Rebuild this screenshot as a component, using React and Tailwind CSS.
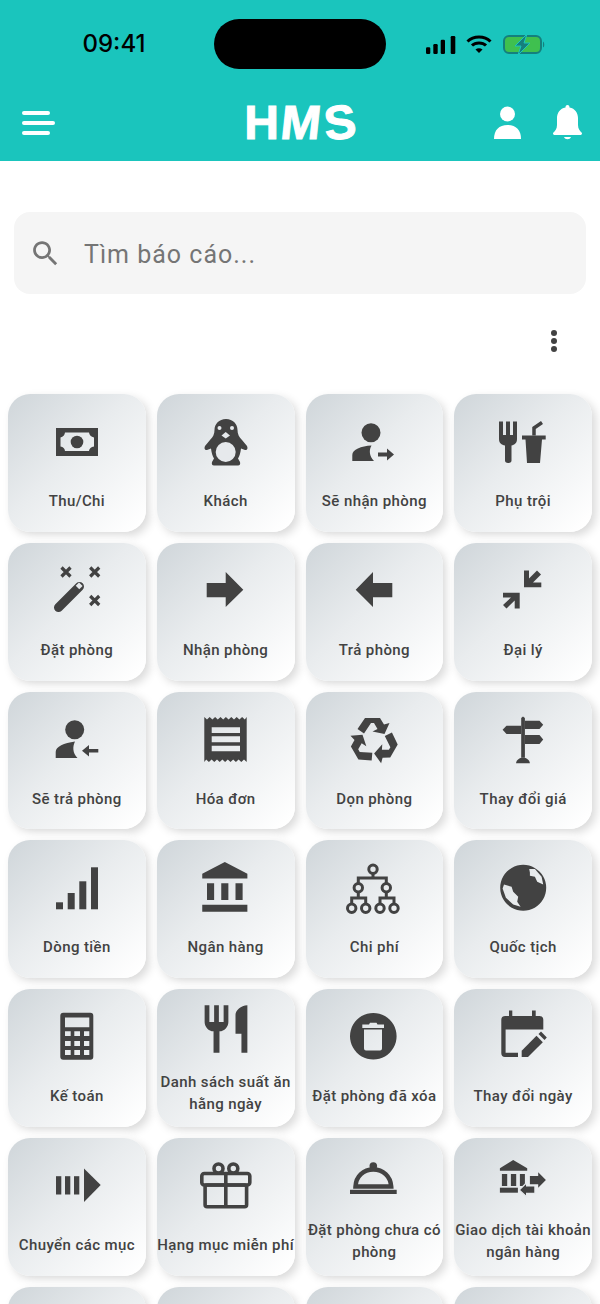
const ink = '#424242';
const cutout = '#e6e9ec';

// every tile glyph is drawn on the same 54 unit square
function Glyph({ children }) {
  return (
    <svg viewBox="0 0 54 54" className="h-[54px] w-[54px] overflow-visible" fill={ink}>
      {children}
    </svg>
  );
}

const Money = () => (
  <Glyph>
    <path
      fillRule="evenodd"
      d="M6 13h42v28H6z M15 17.500H39Q39.500 21.500 44 22.500V31.500Q39.500 32 39 36H15Q14.500 32 10.500 31.500V22.500Q14.500 21.500 15 17.500z"
    />
    <circle cx="27" cy="27" r="6.300" />
  </Glyph>
);

const Penguin = () => (
  <Glyph>
    <path d="M27 4C20 4 15.500 9 15.500 15C15.500 19 14 22 11 25L6 31C5 33 5.500 35.500 8 35L12 33.500C12.500 38 13.500 41 15 43.500L13 47C12.500 49 13 50.500 15 50.500H39C41 50.500 41.500 49 41 47L39 43.500C40.500 41 41.500 38 42 33.500L46 35C48.500 35.500 49 33 48 31L43 25C40 22 38.500 19 38.500 15C38.500 9 34 4 27 4Z" />
    <circle cx="26.700" cy="37" r="10" fill={cutout} />
    <circle cx="20.500" cy="13" r="2" fill={cutout} />
    <circle cx="33" cy="13" r="2" fill={cutout} />
    <path d="M26.700 17L31 20.500L26.700 23.500L22.500 20.500Z" fill={cutout} />
  </Glyph>
);

const PersonIn = () => (
  <Glyph>
    <circle cx="24" cy="17.800" r="9.500" />
    <path d="M5.300 46V40C5.300 34.500 14 31 24.500 30.500C22 35 22 41 27 46Z" />
    <path d="M31 37.500H40V33.500L47 39.500L40 45.500V41.500H31Z" />
  </Glyph>
);

const PersonOut = () => (
  <Glyph>
    <circle cx="24.700" cy="17.700" r="9.500" />
    <path d="M5.700 46V40C5.700 34.500 14 31 25 29.500C22.500 34.500 22.500 41 27.500 46Z" />
    <path d="M48.300 37H39V33L32 38.700L39 44.500V40.500H48.300Z" />
  </Glyph>
);

const ForkCup = () => (
  <Glyph>
    <path d="M3 6.500H7V20H10V6.500H14V20H17V6.500H21V24C21 28 18.500 30 15.500 30.500V45.500C15.500 47 14.500 48 12.500 48H12C10 48 9 47 9 45.500V30.500C5.500 30 3 28 3 24Z" />
    <path d="M26 20.500H49.700V24.500H46L44 48H31L29.500 24.500H26Z" />
    <path d="M38 20.500V13L46 7.500" fill="none" stroke={ink} strokeWidth="3.500" />
  </Glyph>
);

const Wand = () => (
  <Glyph>
    <path d="M8.500 44.500L29.500 23.500" fill="none" stroke={ink} strokeWidth="9" strokeLinecap="round" />
    <path d="M27.500 24.500L30.800 21.200" fill="none" stroke={cutout} strokeWidth="5" />
    <path
      d="M11.500 4.500L20.500 13.500M20.500 4.500L11.500 13.500M40.200 4.500L49.200 13.500M49.200 4.500L40.200 13.500M40.200 33L49.200 42M49.200 33L40.200 42"
      fill="none"
      stroke={ink}
      strokeWidth="3.200"
    />
  </Glyph>
);

const ArrowRight = () => (
  <Glyph>
    <path d="M7.700 20H26.700V9L44.300 26.800L26.700 44V34.200H7.700Z" />
  </Glyph>
);

const ArrowLeft = () => (
  <Glyph>
    <path d="M45.300 20H26V9L8.700 26.800L26 44V34.200H45.300Z" />
  </Glyph>
);

const Compress = () => (
  <Glyph>
    <path d="M28 7.500H33V15.500L41 7.500L45 11.500L37 19.500H45.300V24.200H28Z" />
    <path d="M7 29.800H23.700V45.500H18.700V37.500L10.500 45.500L7 42L15 34.500H7Z" />
  </Glyph>
);

const Receipt = () => (
  <Glyph>
    <path
      fillRule="evenodd"
      d="M5.300 5L8 7.500L10.700 5L13.400 7.500L16.100 5L18.800 7.500L21.500 5L24.200 7.500L26.900 5L29.600 7.500L32.300 5L35 7.500L37.700 5L40.400 7.500L43.100 5L45.800 7.500L47.700 5V50L45 47.500L42.300 50L39.600 47.500L36.900 50L34.200 47.500L31.500 50L28.800 47.500L26.100 50L23.400 47.500L20.700 50L18 47.500L15.300 50L12.600 47.500L9.900 50L7.200 47.500L5.300 50Z M12.700 15.300H41V21H12.700Z M12.700 24.300H41V30.300H12.700Z M12.700 33.700H41V39.300H12.700Z"
    />
  </Glyph>
);

// one chasing arrow, turned twice around the middle of the symbol
const recycleArrow = 'M10.500 17L18 6H33L37 12.500L42.500 11L37.500 22L25.500 19.500L30.500 17L27 11H24L17 21.500Z';

const Recycle = () => (
  <Glyph>
    <path d={recycleArrow} />
    <path d={recycleArrow} transform="rotate(120 26.700 28.700)" />
    <path d={recycleArrow} transform="rotate(240 26.700 28.700)" />
  </Glyph>
);

const Signpost = () => (
  <Glyph>
    <path d="M25.200 6L27 4.500L28.900 6V45.700H25.200Z" />
    <path d="M28.900 8.700H43.500L47.200 12.800L43.500 17H28.900Z" />
    <path d="M25.200 13.700H10.500L6.600 17.800L10.500 22H25.200Z" />
    <path d="M28.900 23H43.500L47.200 27.500L43.500 32H28.900Z" />
    <path d="M20 51.300C20.500 47.500 23.500 45.700 27 45.700C30.500 45.700 33.400 47.500 33.900 51.300Z" />
  </Glyph>
);

const Bars = () => (
  <Glyph>
    <rect x="6" y="41.300" width="7" height="7" />
    <rect x="17.700" y="32" width="7" height="16.300" />
    <rect x="29.300" y="20.300" width="7" height="28" />
    <rect x="41" y="6.300" width="7" height="42" />
  </Glyph>
);

const Bank = () => (
  <Glyph>
    <g transform="translate(-1.500 -1.500) scale(2.375)">
      <path d="M4 10v7h3v-7H4zm6 0v7h3v-7h-3zM2 22h19v-3H2v3zm14-12v7h3v-7h-3zm-4.500-9L2 6v2h19V6l-9.500-5z" />
    </g>
  </Glyph>
);

const Tree = () => (
  <Glyph>
    <g fill="none" stroke={ink} strokeWidth="3">
      <path d="M26 12.500V17M11.300 22.500V17H39.300V22.500M11.300 31V37M4.700 43V37H18.700V43M39.300 31V37M33 43V37H47V43" />
      <circle cx="26" cy="8.300" r="4.200" />
      <circle cx="11.300" cy="26.700" r="4.200" />
      <circle cx="39.300" cy="26.700" r="4.200" />
      <circle cx="4.700" cy="47.300" r="4.200" />
      <circle cx="18.700" cy="47.300" r="4.200" />
      <circle cx="33" cy="47.300" r="4.200" />
      <circle cx="47" cy="47.300" r="4.200" />
    </g>
  </Glyph>
);

const Globe = () => (
  <Glyph>
    <path
      fillRule="evenodd"
      d="M27.200 3.800A23 23 0 1 1 27.199 3.800Z M33.200 8.100L38.900 8.100L45.600 15.800L47.200 23.400L41.200 20.800L38.900 15.800L33.900 14.800L33.900 11.400Z M6.600 27.400L8 23.400L15.600 25.800L17.200 30.800L22.200 35.800L21.200 40.800L24.600 45.800L17.200 43.400L9.900 36.800Z"
    />
  </Glyph>
);

const Calculator = () => (
  <Glyph>
    <path
      fillRule="evenodd"
      d="M13.300 2.800H40.300A3 3 0 0 1 43.300 5.800V46.800A3 3 0 0 1 40.300 49.800H13.300A3 3 0 0 1 10.300 46.800V5.800A3 3 0 0 1 13.300 2.800Z M15 7.500V17.200H39.300V7.500Z M15 21.200V26H20.700V21.200Z M24.300 21.200V26H30V21.200Z M34 21.200V26H39.300V21.200Z M15 31V36H20.700V31Z M24.300 31V36H30V31Z M34 31V36H39.300V31Z M15 40V45H20.700V40Z M24.300 40V45H30V40Z M34 40V45H39.300V40Z"
    />
  </Glyph>
);

const Dining = () => (
  <Glyph>
    <g transform="translate(-1.500 -1.500) scale(2.375)">
      <path d="M11 9H9V2H7v7H5V2H3v7c0 2.120 1.660 3.840 3.750 3.970V22h2.500v-9.030C11.340 12.840 13 11.120 13 9V2h-2v7zm5-3v8h2.500v8H21V2c-2.760 0-5 2.240-5 4z" />
    </g>
  </Glyph>
);

const TrashCircle = () => (
  <Glyph>
    <path
      fillRule="evenodd"
      d="M26.300 2.900A23.300 23.300 0 1 1 26.299 2.900Z M15.300 14.500H22L23 12.800H29.500L30.500 14.500H37V18H15.300Z M17 19.500H35V38.500A2 2 0 0 1 33 40.500H19A2 2 0 0 1 17 38.500Z"
    />
  </Glyph>
);

const CalendarEdit = () => (
  <Glyph>
    <path d="M13 .500H16.300V6H36V.500H39.700V6H43.500A3.800 3.800 0 0 1 47.300 9.800V19.500H9.600V42.700H22V47H9A3.700 3.700 0 0 1 5.300 43.300V9.800A3.800 3.800 0 0 1 9 6H13Z" />
    <path d="M25.700 47V40.700L40.500 25.800L46.800 32.200L32 47Z" />
    <path d="M42.500 24L45 21.500L50.800 27.500L48.500 30Z" />
  </Glyph>
);

const Forward = () => (
  <Glyph>
    <rect x="6" y="18.200" width="5.300" height="18.300" />
    <rect x="15" y="18.200" width="5.300" height="18.300" />
    <rect x="24" y="18.200" width="5.300" height="18.300" />
    <path d="M34 10.500L50.700 27L34 44Z" />
  </Glyph>
);

const Gift = () => (
  <Glyph>
    <g fill="none" stroke={ink} strokeWidth="3.600" strokeLinejoin="round">
      <circle cx="19.500" cy="10.500" r="4.500" />
      <circle cx="34.300" cy="10.500" r="4.500" />
      <rect x="2.800" y="15.500" width="48" height="11.500" rx="2.500" />
      <rect x="6.100" y="27" width="41.500" height="21.700" rx="2" />
      <path d="M26.800 15.500V48.700" />
    </g>
  </Glyph>
);

const Dome = () => (
  <Glyph>
    <circle cx="26.300" cy="15" r="3.800" />
    <path d="M8.500 35.500C9 25 16.500 18.500 26.300 18.500C36 18.500 43.500 25 44.200 35.500Z" fill="none" stroke={ink} strokeWidth="4.500" />
    <rect x="3" y="38.800" width="46.700" height="4.200" />
  </Glyph>
);

const BankTransfer = () => (
  <Glyph>
    <path d="M17.200 9L31.200 17.300V19.700H3.900V17.300Z" />
    <rect x="5.900" y="23" width="5.300" height="12" />
    <rect x="14.900" y="23" width="5.300" height="12" />
    <rect x="23.900" y="23" width="5" height="12" />
    <rect x="3.900" y="36.700" width="18" height="5" />
    <path d="M33.900 25H42.200V21.300L49.900 29L42.200 36.700V33.300H33.900Z" />
    <path d="M38.900 35H30.600V31.700L23.200 39L30.600 45.700V42.300H38.900Z" stroke={cutout} strokeWidth="1.200" />
  </Glyph>
);

const tiles = [
  ['Thu/Chi', Money],
  ['Khách', Penguin],
  ['Sẽ nhận phòng', PersonIn],
  ['Phụ trội', ForkCup],
  ['Đặt phòng', Wand],
  ['Nhận phòng', ArrowRight],
  ['Trả phòng', ArrowLeft],
  ['Đại lý', Compress],
  ['Sẽ trả phòng', PersonOut],
  ['Hóa đơn', Receipt],
  ['Dọn phòng', Recycle],
  ['Thay đổi giá', Signpost],
  ['Dòng tiền', Bars],
  ['Ngân hàng', Bank],
  ['Chi phí', Tree],
  ['Quốc tịch', Globe],
  ['Kế toán', Calculator],
  [<>Danh sách suất ăn<br />hằng ngày</>, Dining],
  ['Đặt phòng đã xóa', TrashCircle],
  ['Thay đổi ngày', CalendarEdit],
  ['Chuyển các mục', Forward],
  ['Hạng mục miễn phí', Gift],
  [<>Đặt phòng chưa có<br />phòng</>, Dome],
  [<>Giao dịch tài khoản<br />ngân hàng</>, BankTransfer],
];

function Tile({ label, Icon }) {
  return (
    <div className="flex aspect-square flex-col items-center justify-evenly rounded-[22px] bg-gradient-to-br from-[#d2d8dc] from-5% via-[#e9ecee] via-45% to-white to-95% shadow-[4px_4px_10px_rgba(0,0,0,0.15),-4px_-4px_10px_rgba(255,255,255,0.9)]">
      {Icon && (
        <div className="flex h-[54px] w-[54px] items-center justify-center">
          <Icon />
        </div>
      )}
      {label && (
        <div className="translate-y-px whitespace-nowrap text-center text-[15px] font-medium leading-[22px] tracking-[0.4px] text-[#424242]">
          {label}
        </div>
      )}
    </div>
  );
}

function StatusIcons() {
  return (
    <div className="flex items-end">
      <svg width="30" height="18" viewBox="0 0 30 18" fill="#000">
        <rect x="0" y="11.300" width="4.300" height="6.700" rx="1.200" />
        <rect x="7.300" y="8" width="4.400" height="10" rx="1.200" />
        <rect x="14.700" y="3.700" width="4.300" height="14.300" rx="1.200" />
        <rect x="24.700" y="0" width="4.600" height="18" rx="1.200" />
      </svg>
      <svg width="26" height="19" viewBox="0 0 26 19" fill="none" stroke="#000" className="ml-[10px]">
        <path d="M1.500 6.500C7.500 .500 18.500 .500 24.500 6.500" strokeWidth="3" />
        <path d="M6 10.500C9.500 7 16.500 7 20 10.500" strokeWidth="3" />
        <path d="M9.500 14.500L13 18L16.500 14.500C14.500 12.800 11.500 12.800 9.500 14.500Z" fill="#000" stroke="none" />
      </svg>
      <svg width="42" height="19" viewBox="0 0 42 19" className="ml-[11px] overflow-visible">
        <rect x="1" y="1" width="37" height="17" rx="5" fill="#3fc04f" stroke="#14807d" strokeWidth="2" />
        <path d="M40 6.500C41.500 7 41.800 12 40 12.500Z" fill="#14807d" />
        <path d="M24 -1L12 11H18L15 20L27 8H21Z" fill="#14807d" stroke="#1ac5bd" strokeWidth="1" />
      </svg>
    </div>
  );
}

export default function App() {
  return (
    <div className="h-[1304px] w-[600px] overflow-hidden bg-white font-['Roboto',sans-serif]">
      <header className="h-[161px] bg-[#1ac5bd]">
        <div className="flex items-center pt-[19px]">
          <div className="w-[214px] pl-[14px] text-center font-['Inter',sans-serif] text-[24px] font-medium leading-[50px] text-black">
            09:41
          </div>
          <div className="h-[50px] w-[172px] rounded-full bg-black" />
          <div className="pl-[40px]">
            <StatusIcons />
          </div>
        </div>

        <div className="relative mt-[35px] flex h-[37px] items-center justify-between pl-[22px] pr-[18px]">
          <div className="flex flex-col items-start gap-[6px]">
            <span className="h-[4px] w-[28px] rounded-full bg-white" />
            <span className="h-[4px] w-[33px] rounded-full bg-white" />
            <span className="h-[4px] w-[28px] rounded-full bg-white" />
          </div>
          <div className="absolute left-0 right-0 text-center font-['Liberation_Sans',sans-serif] text-[48px] font-bold leading-[37px] text-white [-webkit-text-stroke:1px_white]">
            <span className="inline-block">H</span>
            <span className="ml-[2px] inline-block -skew-x-6">M</span>
            <span className="ml-[3px] inline-block -rotate-6">S</span>
          </div>
          <div className="flex items-center gap-[32px]">
            <svg width="27" height="33" viewBox="0 0 27 33" fill="#fff">
              <circle cx="13.500" cy="8" r="7.500" />
              <path d="M0 33C0 24 5 19 13.500 19C22 19 27 24 27 33Z" />
            </svg>
            <svg width="29" height="35" viewBox="0 0 29 35" fill="#fff">
              <path d="M14.500 0C16 0 16.500 1 16.500 2.500C22 3.500 25 8 25 13V20C25 24 27 26 29 28C29 29.500 28.500 30 27 30H2C.500 30 0 29.500 0 28C2 26 4 24 4 20V13C4 8 7 3.500 12.500 2.500C12.500 1 13 0 14.500 0Z" />
              <path d="M11 32H18C17 35 12 35 11 32Z" />
            </svg>
          </div>
        </div>
      </header>

      <div className="mx-[14px] mt-[51px] flex h-[82px] items-center rounded-[16px] bg-[#f5f5f5] pl-[15px] text-[25px] leading-none text-[#757575]">
        <svg width="33" height="33" viewBox="0 0 24 24" fill="#757575">
          <path d="M15.500 14h-.790l-.280-.270C15.410 12.590 16 11.110 16 9.500 16 5.910 13.090 3 9.500 3S3 5.910 3 9.500 5.910 16 9.500 16c1.610 0 3.090-.590 4.230-1.570l.270.280v.790l5 4.990L20.490 19l-4.990-5zm-6 0C7.010 14 5 11.990 5 9.500S7.010 5 9.500 5 14 7.010 14 9.500 11.990 14 9.500 14z" />
        </svg>
        <span className="ml-[22px] mt-[2px] tracking-[1px]">Tìm báo cáo...</span>
      </div>

      <div className="flex h-[100px] items-center justify-end pb-[7px] pr-[43px]">
        <svg width="6" height="22" viewBox="0 0 6 22" fill="#424242">
          <circle cx="3" cy="3" r="3" />
          <circle cx="3" cy="11" r="3" />
          <circle cx="3" cy="19" r="3" />
        </svg>
      </div>

      <div className="grid grid-cols-4 gap-[11px] px-2">
        {tiles.map(([label, Icon], i) => (
          <Tile key={i} label={label} Icon={Icon} />
        ))}
        <Tile />
        <Tile />
        <Tile />
        <Tile />
      </div>
    </div>
  );
}
